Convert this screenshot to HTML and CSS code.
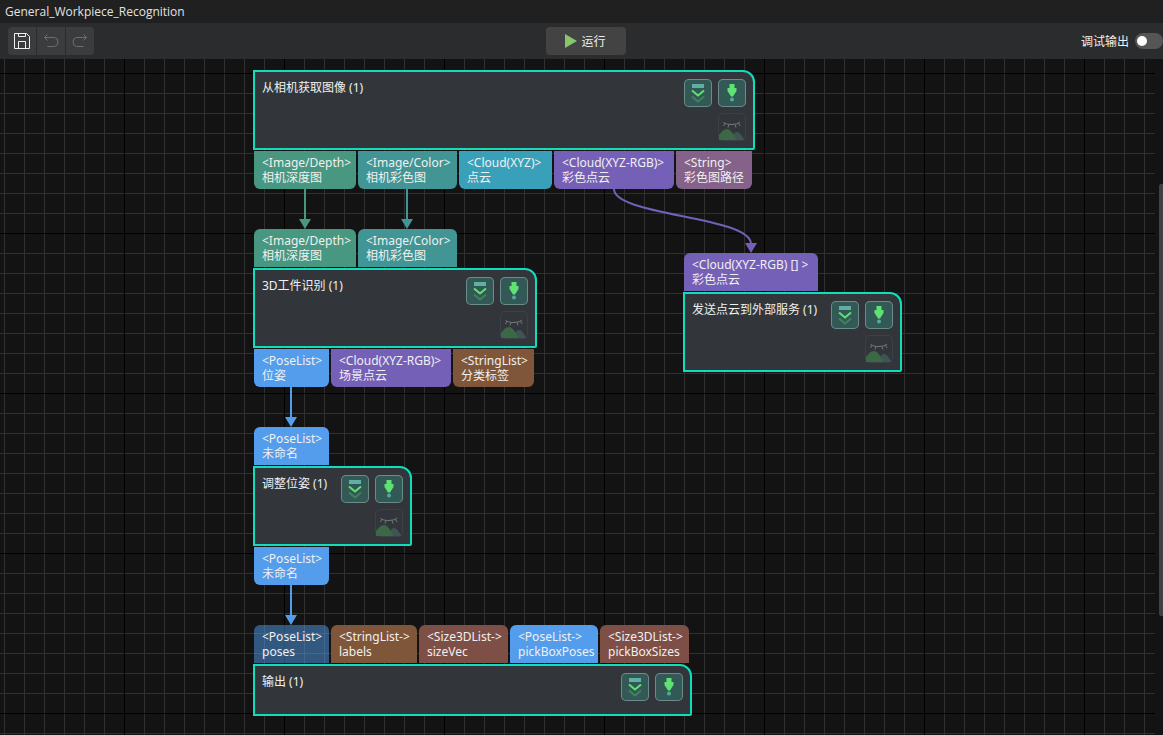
FILE: index.html
```html
<!DOCTYPE html>
<html lang="zh-CN">
<head>
<meta charset="utf-8">
<title>General_Workpiece_Recognition</title>
<link rel="stylesheet" href="styles.css">
</head>
<body>
<svg class="symbols" aria-hidden="true">
  <symbol id="i-step" viewBox="0 0 28 28">
    <rect x="8" y="5" width="12" height="4" fill="#5fb0a3"/>
    <path d="M8 17.500L14 22.500L20 17.500" fill="none" stroke="#43825f" stroke-width="2"/>
    <path d="M8 11.500L14 16.500L20 11.500" fill="none" stroke="#5fe273" stroke-width="2"/>
  </symbol>
  <symbol id="i-run" viewBox="0 0 28 28">
    <path d="M11.500 5h5v4h2v3l-3.500 5.500h-2l-3.500-5.500v-3h2z" fill="#5fe273"/>
    <circle cx="14" cy="20.500" r="2" fill="#52aa9b"/>
  </symbol>
  <symbol id="i-view" viewBox="0 0 28 28">
    <path d="M12 27C15 22 16 19 19 19C22 19 24 23 26.500 27z" fill="#3d5654"/>
    <path d="M1 27V22C4 18 6 16 9 16C13 16 15 21 18.500 27z" fill="#3c6846"/>
    <path d="M5.500 9Q7 11.500 14 11.500Q20 11.500 22 9M7 10L5.500 13M11 11.500L10 14.500M17 11.500L18 14.500M20.500 10L22 13" fill="none" stroke="#74787b" stroke-width="1"/>
  </symbol>
</svg>

<header class="titlebar"><h1 class="title">General_Workpiece_Recognition</h1></header>

<div class="toolbar">
  <div class="tools">
    <button class="tool" type="button" aria-label="保存">
      <svg class="tool-icon" viewBox="0 0 28 28"><path d="M6.500 6.500H18.500L21.500 9.500V21.500H6.500zM10.500 6.500V9.500H17.500V6.500M10.500 21.500V14.500H17.500V21.500" stroke="#f0f0f0"/></svg>
    </button>
    <button class="tool" type="button" aria-label="撤销" disabled>
      <svg class="tool-icon" viewBox="0 0 28 28"><path d="M10.500 7.500L7.500 10.500L10.500 13.500M7.500 10.500H17.500Q21 11 21 15Q21 19 17.500 19.500H10.500" stroke="#6d6e70"/></svg>
    </button>
    <button class="tool" type="button" aria-label="重做" disabled>
      <svg class="tool-icon" viewBox="0 0 28 28"><path d="M17.500 7.500L20.500 10.500L17.500 13.500M20.500 10.500H10.500Q7 11 7 15Q7 19 10.500 19.500H17.500" stroke="#6d6e70"/></svg>
    </button>
  </div>
  <button class="run" type="button"><svg class="run-icon" viewBox="0 0 12 14"><path d="M0 0L12 7L0 14z" fill="#87c66a"/></svg>运行</button>
  <label class="debug">调试输出<input class="switch" type="checkbox"></label>
</div>

<main class="canvas">
  <div class="grid"></div>
  <div class="scroll-thumb"></div>

  <svg class="edges" aria-hidden="true">
    <g stroke="#479781" fill="#479781"><path class="wire" d="M305 130V162"/><path class="tip" d="M299 160H311L305 170z"/></g>
    <g stroke="#419595" fill="#419595"><path class="wire" d="M407 130V162"/><path class="tip" d="M401 160H413L407 170z"/></g>
    <g stroke="#7560b8" fill="#7560b8"><path class="wire" d="M614 130C614 157 751 157 751 185"/><path class="tip" d="M745 184H757L751 194z"/></g>
    <g stroke="#549dec" fill="#549dec"><path class="wire" d="M291 328V360"/><path class="tip" d="M285 358H297L291 368z"/></g>
    <g stroke="#549dec" fill="#549dec"><path class="wire" d="M291 526V558"/><path class="tip" d="M285 556H297L291 566z"/></g>
  </svg>

  <section class="step step-capture">
    <div class="box">
      <h2 class="name">从相机获取图像 (1)</h2>
      <div class="actions">
        <button class="act" type="button" aria-label="单步执行"><svg><use href="#i-step"/></svg></button>
        <button class="act" type="button" aria-label="运行到此"><svg><use href="#i-run"/></svg></button>
        <button class="act view" type="button" aria-label="可视化"><svg><use href="#i-view"/></svg></button>
      </div>
    </div>
    <div class="ports out">
      <div class="port depth"><span>&lt;Image/Depth&gt;</span><span>相机深度图</span></div>
      <div class="port color"><span>&lt;Image/Color&gt;</span><span>相机彩色图</span></div>
      <div class="port xyz"><span>&lt;Cloud(XYZ)&gt;</span><span>点云</span></div>
      <div class="port rgb"><span>&lt;Cloud(XYZ-RGB)&gt;</span><span>彩色点云</span></div>
      <div class="port string"><span>&lt;String&gt;</span><span>彩色图路径</span></div>
    </div>
  </section>

  <section class="step step-recognise">
    <div class="ports in">
      <div class="port depth"><span>&lt;Image/Depth&gt;</span><span>相机深度图</span></div>
      <div class="port color"><span>&lt;Image/Color&gt;</span><span>相机彩色图</span></div>
    </div>
    <div class="box">
      <h2 class="name">3D工件识别 (1)</h2>
      <div class="actions">
        <button class="act" type="button" aria-label="单步执行"><svg><use href="#i-step"/></svg></button>
        <button class="act" type="button" aria-label="运行到此"><svg><use href="#i-run"/></svg></button>
        <button class="act view" type="button" aria-label="可视化"><svg><use href="#i-view"/></svg></button>
      </div>
    </div>
    <div class="ports out">
      <div class="port pose"><span>&lt;PoseList&gt;</span><span>位姿</span></div>
      <div class="port rgb"><span>&lt;Cloud(XYZ-RGB)&gt;</span><span>场景点云</span></div>
      <div class="port strings"><span>&lt;StringList&gt;</span><span>分类标签</span></div>
    </div>
  </section>

  <section class="step step-send">
    <div class="ports in">
      <div class="port rgb rgb-list"><span>&lt;Cloud(XYZ-RGB) [] &gt;</span><span>彩色点云</span></div>
    </div>
    <div class="box">
      <h2 class="name">发送点云到外部服务 (1)</h2>
      <div class="actions">
        <button class="act" type="button" aria-label="单步执行"><svg><use href="#i-step"/></svg></button>
        <button class="act" type="button" aria-label="运行到此"><svg><use href="#i-run"/></svg></button>
        <button class="act view" type="button" aria-label="可视化"><svg><use href="#i-view"/></svg></button>
      </div>
    </div>
  </section>

  <section class="step step-adjust">
    <div class="ports in">
      <div class="port pose"><span>&lt;PoseList&gt;</span><span>未命名</span></div>
    </div>
    <div class="box">
      <h2 class="name">调整位姿 (1)</h2>
      <div class="actions">
        <button class="act" type="button" aria-label="单步执行"><svg><use href="#i-step"/></svg></button>
        <button class="act" type="button" aria-label="运行到此"><svg><use href="#i-run"/></svg></button>
        <button class="act view" type="button" aria-label="可视化"><svg><use href="#i-view"/></svg></button>
      </div>
    </div>
    <div class="ports out">
      <div class="port pose"><span>&lt;PoseList&gt;</span><span>未命名</span></div>
    </div>
  </section>

  <section class="step step-output">
    <div class="ports in">
      <div class="port pose linked"><span>&lt;PoseList&gt;</span><span>poses</span></div>
      <div class="port strings strings-opt"><span>&lt;StringList-&gt;</span><span>labels</span></div>
      <div class="port size"><span>&lt;Size3DList-&gt;</span><span>sizeVec</span></div>
      <div class="port pose pose-opt"><span>&lt;PoseList-&gt;</span><span>pickBoxPoses</span></div>
      <div class="port size"><span>&lt;Size3DList-&gt;</span><span>pickBoxSizes</span></div>
    </div>
    <div class="box">
      <h2 class="name">输出 (1)</h2>
      <div class="actions">
        <button class="act" type="button" aria-label="单步执行"><svg><use href="#i-step"/></svg></button>
        <button class="act" type="button" aria-label="运行到此"><svg><use href="#i-run"/></svg></button>
      </div>
    </div>
  </section>
</main>
</body>
</html>
```
FILE: styles.css
```css
* { box-sizing: border-box; }

body {
  margin: 0;
  height: 100vh;
  display: flex;
  flex-direction: column;
  overflow: hidden;
  background: #131313;
  color: #f0f0f0;
  font: 12px/15px "Noto Sans", "Noto Sans CJK SC", sans-serif;
}

button { border: 0; padding: 0; font: inherit; color: inherit; }

.symbols { display: none; }

.titlebar {
  padding: 4px 5px;
  background: #202020;
}
.title {
  margin: 0;
  font: 12px/15px "Open Sans", "Noto Sans CJK SC", sans-serif;
  color: #e2e2e2;
}

.toolbar {
  display: grid;
  grid-template-columns: 1fr auto 1fr;
  align-items: center;
  padding: 4px 0 4px 10px;
  padding-left: 8px;
  background: #2b2c2e;
}
.tools { display: flex; gap: 1px; border-radius: 4px; overflow: hidden; justify-self: start; }
.tool { display: block; width: 28px; height: 28px; background: #3b3c3e; }
.tool-icon { display: block; width: 28px; height: 28px; fill: none; }

.run {
  display: flex;
  align-items: center;
  justify-content: center;
  gap: 4px;
  width: 80px;
  height: 28px;
  border-radius: 4px;
  background: #434343;
}
.run-icon { width: 12px; height: 14px; }

.debug { display: flex; align-items: center; gap: 6px; justify-self: end; }
.switch {
  appearance: none;
  display: flex;
  align-items: center;
  width: 28px;
  height: 16px;
  margin: 0;
  padding: 0 2px;
  border-radius: 8px;
  background: #555;
}
.switch::before {
  content: "";
  width: 10px;
  height: 10px;
  border-radius: 50%;
  background: #fff;
}
.switch:checked { justify-content: flex-end; }

.canvas { position: relative; flex: 1; overflow: hidden; }

.grid {
  position: absolute;
  inset: 0 8px 0 0;
  background-image:
    linear-gradient(#000 1px, transparent 1px),
    linear-gradient(90deg, #000 1px, transparent 1px),
    linear-gradient(#303030 1px, transparent 1px),
    linear-gradient(90deg, #303030 1px, transparent 1px);
  background-size: 160px 160px, 160px 160px, 20px 20px, 20px 20px;
  background-position: 0 14px, 124px 0, 0 14px, 4px 0;
}
.scroll-thumb {
  position: absolute;
  top: 125px;
  right: 0;
  width: 4px;
  height: 432px;
  border-radius: 2px 0 0 2px;
  background: #404040;
}

.edges { position: absolute; inset: 0; width: 100%; height: 100%; }
.wire { fill: none; stroke-width: 2; }
.tip { stroke: none; }

.step { position: absolute; display: flex; flex-direction: column; gap: 1px; }
.step-capture { left: 253px; top: 11px; width: 502px; }
.step-recognise { left: 253px; top: 170px; width: 284px; }
.step-send { left: 683px; top: 194px; width: 219px; }
.step-adjust { left: 253px; top: 368px; width: 159px; }
.step-output { left: 253px; top: 566px; width: 439px; }

.box {
  display: flex;
  justify-content: space-between;
  padding: 7px;
  border: 2px solid #11ddbd;
  border-radius: 0 12px 2px 0;
  background: #32363a;
}
.name { margin: 0; font: inherit; line-height: 17px; white-space: nowrap; }
.step-output .box { padding-bottom: 13px; }

.actions { display: grid; grid-template-columns: 28px 28px; gap: 6px; }
.act {
  height: 28px;
  border-radius: 5px;
  background: #335957;
  box-shadow: inset 0 0 0 1px #6c8b8b;
}
.act svg { display: block; width: 28px; height: 28px; }
.view { grid-column: 2; background: none; box-shadow: inset 0 0 0 1px #3b4148; }

.ports { display: flex; gap: 2px; margin-left: 1px; }
.port {
  display: flex;
  flex-direction: column;
  flex: none;
  padding: 4px 8px;
  white-space: nowrap;
}
.in .port { border-radius: 6px 6px 0 0; }
.out .port { border-radius: 0 0 6px 6px; }

.depth { width: 102px; background: #479781; }
.color { width: 99px; background: #419595; }
.xyz { width: 93px; background: #38a1b9; }
.rgb { width: 120px; background: #7560b8; }
.rgb-list { width: 134px; }
.string { width: 76px; background: #846289; }
.pose { width: 75px; background: #549dec; }
.pose-opt { width: 88px; }
.linked { background: rgba(84, 157, 236, 0.5); }
.strings { width: 81px; background: #7f5639; }
.strings-opt { width: 86px; }
.size { width: 89px; background: #7e4f47; }
```
